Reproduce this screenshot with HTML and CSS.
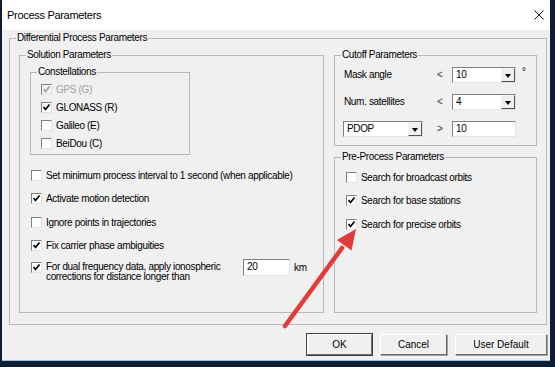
FILE: index.html
```html
<!DOCTYPE html>
<html>
<head>
<meta charset="utf-8">
<link rel="stylesheet" href="styles.css">
</head>
<body>
<div class="window">
  <div class="titlebar">
    <span class="title">Process Parameters</span>
    <svg class="close" width="10" height="10" viewBox="0 0 10 10"><path d="M0.5 0.5 L9.5 9.5 M9.5 0.5 L0.5 9.5" stroke="#111" stroke-width="1" fill="none"/></svg>
  </div>
  <div class="client">
    <fieldset class="group diff">
      <legend>Differential Process Parameters</legend>
      <div class="diff-cols">
        <fieldset class="group sol">
          <legend>Solution Parameters</legend>
          <fieldset class="group const">
            <legend>Constellations</legend>
            <div class="crow disabled"><span class="cb"><svg viewBox="0 0 9 9"><path d="M1.5 4 L3.5 6.5 L7.5 1.5" /></svg></span>GPS (G)</div>
            <div class="crow"><span class="cb"><svg viewBox="0 0 9 9"><path d="M1.5 4 L3.5 6.5 L7.5 1.5" /></svg></span>GLONASS (R)</div>
            <div class="crow"><span class="cb"></span>Galileo (E)</div>
            <div class="crow"><span class="cb"></span>BeiDou (C)</div>
          </fieldset>
          <div class="opts sol-opts">
            <div class="row"><span class="cb"></span>Set minimum process interval to 1 second (when applicable)</div>
            <div class="row"><span class="cb"><svg viewBox="0 0 9 9"><path d="M1.5 4 L3.5 6.5 L7.5 1.5" /></svg></span>Activate motion detection</div>
            <div class="row"><span class="cb"></span>Ignore points in trajectories</div>
            <div class="row"><span class="cb"><svg viewBox="0 0 9 9"><path d="M1.5 4 L3.5 6.5 L7.5 1.5" /></svg></span>Fix carrier phase ambiguities</div>
            <div class="row multi">
              <span class="cb"><svg viewBox="0 0 9 9"><path d="M1.5 4 L3.5 6.5 L7.5 1.5" /></svg></span>
              <span class="multi-text">For dual frequency data, apply ionospheric corrections for distance longer than</span>
              <span class="field km-field">20</span>
              <span class="unit">km</span>
            </div>
          </div>
        </fieldset>
        <div class="rcol">
          <fieldset class="group cutoff">
            <legend>Cutoff Parameters</legend>
            <div class="cgrid">
              <span class="clabel">Mask angle</span>
              <span class="op">&lt;</span>
              <span class="combo"><span class="ctext">10</span><span class="cbtn"><i></i></span></span>
              <span class="deg">°</span>
              <span class="clabel">Num. satellites</span>
              <span class="op">&lt;</span>
              <span class="combo"><span class="ctext">4</span><span class="cbtn"><i></i></span></span>
              <span></span>
              <span class="combo pdop"><span class="ctext">PDOP</span><span class="cbtn"><i></i></span></span>
              <span class="op">&gt;</span>
              <span class="field">10</span>
              <span></span>
            </div>
          </fieldset>
          <fieldset class="group pre">
            <legend>Pre-Process Parameters</legend>
            <div class="opts">
              <div class="row"><span class="cb"></span>Search for broadcast orbits</div>
              <div class="row"><span class="cb"><svg viewBox="0 0 9 9"><path d="M1.5 4 L3.5 6.5 L7.5 1.5" /></svg></span>Search for base stations</div>
              <div class="row"><span class="cb"><svg viewBox="0 0 9 9"><path d="M1.5 4 L3.5 6.5 L7.5 1.5" /></svg></span>Search for precise orbits</div>
            </div>
          </fieldset>
        </div>
      </div>
    </fieldset>
    <div class="buttons">
      <button class="btn ok">OK</button>
      <button class="btn cancel">Cancel</button>
      <button class="btn udef">User Default</button>
    </div>
  </div>
  <svg class="arrow" width="555" height="367" viewBox="0 0 555 367">
    <line x1="285" y1="326" x2="342" y2="248" stroke="#e23b3b" stroke-width="4.5" stroke-linecap="round"/>
    <polygon points="356,229 351.5,250.5 336.9,239.9" fill="#e23b3b"/>
  </svg>
</div>
</body>
</html>
```
FILE: styles.css
```css
* { box-sizing: border-box; }
html, body { margin: 0; padding: 0; }
body {
  background: #0f1d31;
  width: 555px;
  height: 367px;
  overflow: hidden;
  font-family: "Liberation Sans", Arial, sans-serif;
  font-size: 10px;
  letter-spacing: -0.35px;
  color: #000;
}
.window {
  position: relative;
  width: 548px;
  height: 361px;
  margin-left: 2px;
  background: #f0f0f0;
  border-bottom: 1px solid #9fc4e8;
  display: flex;
  flex-direction: column;
}
.titlebar {
  height: 30px;
  background: #fff;
  display: flex;
  align-items: center;
  padding-left: 5px;
  flex: none;
}
.title { font-size: 11px; letter-spacing: -0.3px; }
.close { margin-left: auto; margin-right: 6px; }
.client {
  flex: 1;
  padding: 2px 3px 0 7px;
}
.group {
  margin: 0;
  border: 1px solid #b8b8b8;
  min-width: 0;
}
.group > legend {
  padding: 0 1px;
  line-height: 12px;
  height: 12px;
}
.diff { padding: 5px 9px 11px 9px; }
.diff > legend { margin-left: -3px; }
.diff-cols {
  display: flex;
  gap: 10px;
  height: 264px;
}
.sol { width: 305px; flex: none; padding: 5px 10px 0 10px; }
.sol > legend { margin-left: -4px; }
.const { width: 160px; padding: 2px 9px 2px 9px; }
.const > legend { margin-left: -3px; }
.crow {
  height: 18px;
  display: flex;
  align-items: center;
  padding-left: 1px;
}
.crow.disabled { color: #a0a0a0; }
.cb {
  width: 11px;
  height: 11px;
  flex: none;
  background: #fff;
  border: 1px solid;
  border-color: #808080 #e3e3e3 #e3e3e3 #808080;
  margin-right: 4px;
  display: flex;
  align-items: center;
  justify-content: center;
}
.cb svg { width: 9px; height: 9px; display: block; }
.cb path { fill: none; stroke: #000; stroke-width: 1.7; }
.disabled .cb { background: #f0f0f0; }
.disabled .cb path { stroke: #a0a0a0; }
.opts {
  display: flex;
  flex-direction: column;
  gap: 9.5px;
  padding-left: 1px;
}
.sol-opts { margin-top: 13px; }
.row {
  min-height: 14px;
  display: flex;
  align-items: center;
  white-space: nowrap;
}
.row.multi { align-items: flex-start; }
.multi-text {
  white-space: normal;
  width: 197px;
  line-height: 10px;
}
.field {
  height: 16px;
  background: #fff;
  border: 1px solid;
  border-color: #808080 #e3e3e3 #e3e3e3 #808080;
  padding-left: 3px;
  line-height: 14px;
}
.km-field { width: 47px; margin-top: -3px; height: 17px; }
.unit { margin-left: 4px; line-height: 10px; margin-top: 1px; }
.rcol {
  flex: 1;
  display: flex;
  flex-direction: column;
  gap: 5px;
}
.cutoff { padding: 6px 8px 8px 8px; }
.cutoff > legend { margin-left: -2px; }
.cgrid {
  display: grid;
  grid-template-columns: 94px 15px 64px auto;
  row-gap: 11px;
  align-items: center;
}
.cgrid > * { height: 16px; }
.clabel { padding-left: 1px; line-height: 16px; }
.op { line-height: 16px; color: #333; }
.deg { margin-left: 6px; line-height: 10px; align-self: start; }
.combo {
  display: flex;
  background: #fff;
  border: 1px solid;
  border-color: #808080 #e3e3e3 #e3e3e3 #808080;
}
.combo.pdop { width: 80px; }
.ctext { flex: 1; padding-left: 3px; line-height: 14px; }
.cbtn {
  width: 14px;
  height: 14px;
  background: #f0f0f0;
  border: 1px solid;
  border-color: #f4f4f4 #505050 #505050 #f4f4f4;
  display: flex;
  align-items: center;
  justify-content: center;
}
.cbtn i {
  width: 0;
  height: 0;
  border-left: 3.5px solid transparent;
  border-right: 3.5px solid transparent;
  border-top: 4px solid #000;
  margin-top: 1px;
}
.pre { flex: 1; padding: 7px 10px 0 10px; }
.pre > legend { margin-left: -4px; }
.buttons {
  display: flex;
  justify-content: flex-end;
  gap: 8px;
  margin-top: 9px;
}
.btn {
  height: 21px;
  font: inherit;
  font-size: 10px;
  background: #f0f0f0;
  border: 1px solid;
  border-color: #ffffff #6a6a6a #6a6a6a #ffffff;
  box-shadow: 1px 1px 0 #a0a0a0;
  padding: 0;
  color: #000;
}
.ok { width: 65px; outline: 1px solid #404040; outline-offset: 0; }
.cancel { width: 67px; }
.udef { width: 92px; }
.arrow {
  position: absolute;
  left: -2px;
  top: 0;
  pointer-events: none;
}
```
